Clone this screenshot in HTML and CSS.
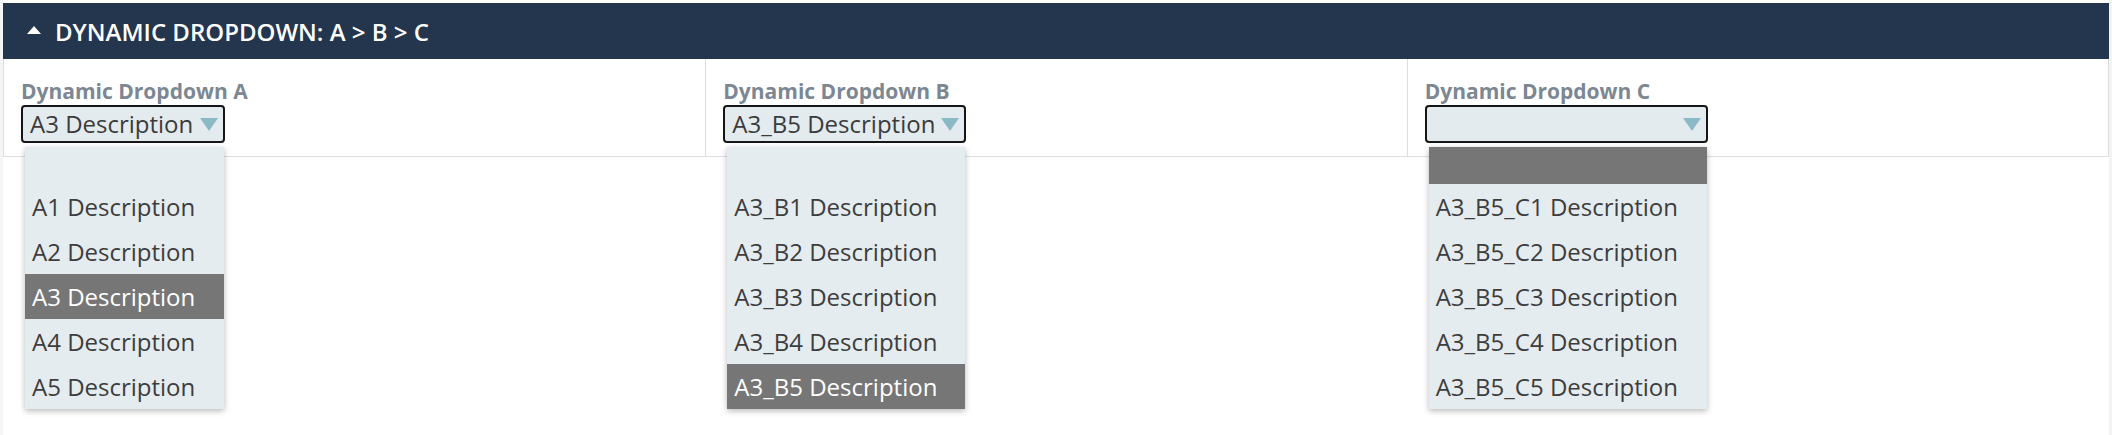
FILE: index.html
```html
<!DOCTYPE html>
<html lang="en">
<head>
<meta charset="utf-8">
<title>Dynamic Dropdown</title>
<link rel="stylesheet" href="styles.css">
</head>
<body>
<div class="page">
  <section class="panel">
    <header class="panel-head">
      <svg class="caret-up" width="14" height="8" viewBox="0 0 14 8"><path d="M7 0 L14 8 L0 8 Z" fill="#fff"/></svg>
      <h2 class="panel-title">DYNAMIC DROPDOWN: A &gt; B &gt; C</h2>
    </header>
    <div class="panel-body">
      <div class="field">
        <div class="field-label">Dynamic Dropdown A</div>
        <div class="select-wrap">
          <div class="select select-a">
            <span class="select-value">A3 Description</span>
            <svg class="select-arrow" width="18" height="13" viewBox="0 0 18 13"><path d="M0 0 H18 L9 13 Z"/></svg>
          </div>
          <ul class="listbox">
            <li class="option option-empty"></li>
            <li class="option">A1 Description</li>
            <li class="option">A2 Description</li>
            <li class="option is-selected">A3 Description</li>
            <li class="option">A4 Description</li>
            <li class="option">A5 Description</li>
          </ul>
        </div>
      </div>
      <div class="field">
        <div class="field-label">Dynamic Dropdown B</div>
        <div class="select-wrap">
          <div class="select select-b">
            <span class="select-value">A3_B5 Description</span>
            <svg class="select-arrow" width="18" height="13" viewBox="0 0 18 13"><path d="M0 0 H18 L9 13 Z"/></svg>
          </div>
          <ul class="listbox">
            <li class="option option-empty"></li>
            <li class="option">A3_B1 Description</li>
            <li class="option">A3_B2 Description</li>
            <li class="option">A3_B3 Description</li>
            <li class="option">A3_B4 Description</li>
            <li class="option is-selected">A3_B5 Description</li>
          </ul>
        </div>
      </div>
      <div class="field">
        <div class="field-label">Dynamic Dropdown C</div>
        <div class="select-wrap">
          <div class="select select-c">
            <span class="select-value"></span>
            <svg class="select-arrow" width="18" height="13" viewBox="0 0 18 13"><path d="M0 0 H18 L9 13 Z"/></svg>
          </div>
          <ul class="listbox">
            <li class="option option-empty is-selected"></li>
            <li class="option">A3_B5_C1 Description</li>
            <li class="option">A3_B5_C2 Description</li>
            <li class="option">A3_B5_C3 Description</li>
            <li class="option">A3_B5_C4 Description</li>
            <li class="option">A3_B5_C5 Description</li>
          </ul>
        </div>
      </div>
    </div>
  </section>
</div>
</body>
</html>
```
FILE: styles.css
```css
html, body {
  margin: 0;
  padding: 0;
  background: #ffffff;
  font-family: "Open Sans", "Liberation Sans", sans-serif;
}

.page {
  height: 435px;
  box-sizing: border-box;
  padding: 3px 3px 0 3px;
  background: linear-gradient(to right, #f4f5f7 0, #f4f5f7 3px, #ffffff 3px, #ffffff calc(100% - 3px), #f3f3f3 calc(100% - 3px));
}

.panel {
  background: #ffffff;
}

.panel-head {
  height: 56px;
  background: #24354e;
  display: flex;
  align-items: center;
  padding-left: 24px;
  gap: 14px;
}

.caret-up {
  display: block;
  margin-top: -2px;
}

.panel-title {
  margin: 0;
  color: #ffffff;
  font-size: 24px;
  font-weight: 600;
  letter-spacing: 0;
}

.panel-body {
  display: grid;
  grid-template-columns: repeat(3, 1fr);
  border: 1px solid #dddddd;
  border-top: 0;
}

.field {
  padding: 18px 17px 13px 17px;
}

.field + .field {
  border-left: 1px solid #dddddd;
}

.field-label {
  font-size: 21px;
  font-weight: 700;
  color: #7c8793;
  line-height: 28px;
  padding-left: 0;
}

.select-wrap {
  position: relative;
  width: max-content;
}

.select {
  height: 38px;
  box-sizing: border-box;
  border: 2px solid #161616;
  border-radius: 4px;
  background: #e4ebef;
  display: flex;
  align-items: center;
  justify-content: space-between;
  padding: 0 5px 0 7px;
}

.select-a { width: 204px; }
.select-b { width: 243px; }
.select-c { width: 283px; }

.select-value {
  font-size: 24px;
  line-height: 34px;
  color: #3b3b3b;
  white-space: nowrap;
}

.select-arrow {
  display: block;
  fill: #8bb9c6;
  flex: none;
}

.listbox {
  position: absolute;
  top: 42px;
  left: 4px;
  right: 1px;
  margin: 0;
  padding: 0;
  list-style: none;
  background: #e5ecf0;
  box-shadow: 0 2px 6px rgba(0, 0, 0, 0.28);
  z-index: 2;
}

.option {
  height: 45px;
  line-height: 45px;
  padding-left: 7px;
  font-size: 24px;
  color: #3d3d3d;
  white-space: nowrap;
}

.option-empty {
  height: 37px;
}

.option.is-selected {
  background: #767676;
  color: #ffffff;
}
```
